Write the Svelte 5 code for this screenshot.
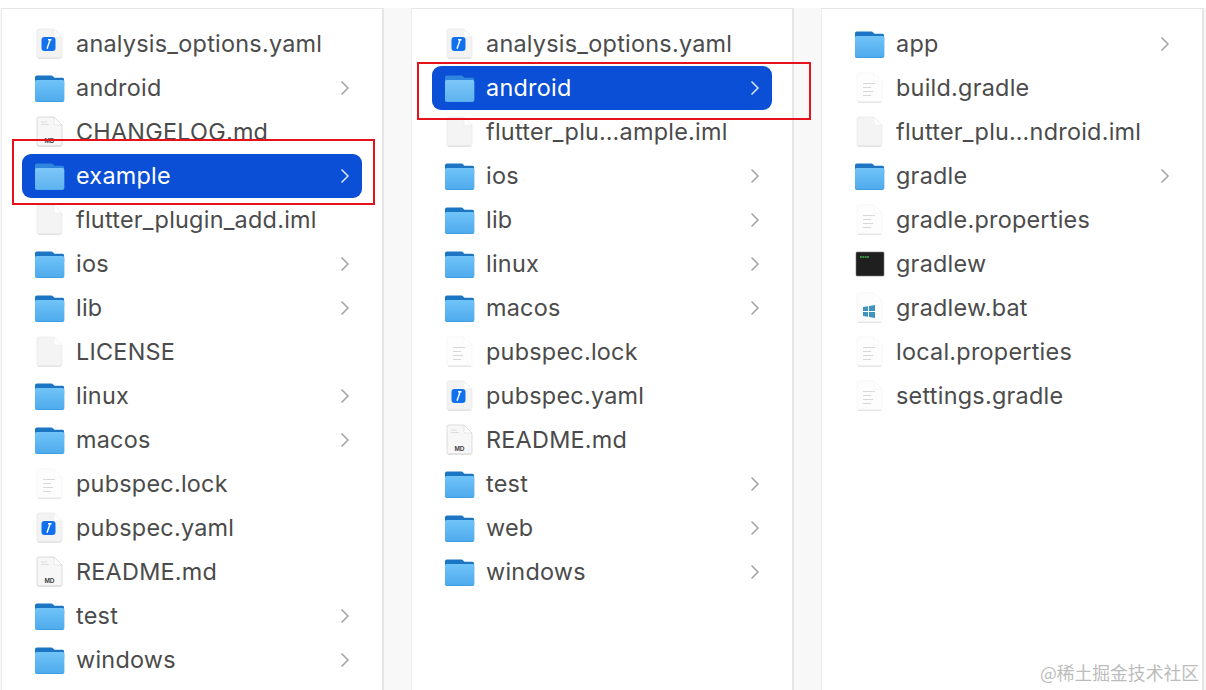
<script>
  const columns = [
    { rows: [
      ['analysis_options.yaml', 'yaml'], ['android', 'folder'], ['CHANGELOG.md', 'md'], ['example', 'folder', true],
      ['flutter_plugin_add.iml', 'file'], ['ios', 'folder'], ['lib', 'folder'], ['LICENSE', 'file'],
      ['linux', 'folder'], ['macos', 'folder'], ['pubspec.lock', 'text'], ['pubspec.yaml', 'yaml'],
      ['README.md', 'md'], ['test', 'folder'], ['windows', 'folder']
    ] },
    { rows: [
      ['analysis_options.yaml', 'yaml'], ['android', 'folder', true], ['flutter_plu…ample.iml', 'file'], ['ios', 'folder'],
      ['lib', 'folder'], ['linux', 'folder'], ['macos', 'folder'], ['pubspec.lock', 'text'],
      ['pubspec.yaml', 'yaml'], ['README.md', 'md'], ['test', 'folder'], ['web', 'folder'], ['windows', 'folder']
    ] },
    { rows: [
      ['app', 'folder'], ['build.gradle', 'text'], ['flutter_plu…ndroid.iml', 'file'], ['gradle', 'folder'],
      ['gradle.properties', 'text'], ['gradlew', 'term'], ['gradlew.bat', 'win'], ['local.properties', 'text'],
      ['settings.gradle', 'text']
    ] }
  ];
</script>

{#snippet sheet(fill, edge)}
  <path d="M4.500 1h15.500l8 8v19.500a1.500 1.500 0 0 1-1.500 1.500H4.500A1.500 1.500 0 0 1 3 28.500V2.500A1.500 1.500 0 0 1 4.500 1z" fill={fill} stroke={edge} stroke-width="0.700"/>
  <path d="M20 1v6.500a1.500 1.500 0 0 0 1.500 1.500H28z" fill="#fff" stroke={edge} stroke-width="0.500"/>
  <path d="M4 30.200h23" stroke="#d6d6d6" stroke-width="0.800"/>
{/snippet}

{#snippet icon(kind, active)}
  <svg class="icon" viewBox="0 0 32 32" width="32" height="32" aria-hidden="true">
    {#if kind === 'folder'}
      <path d="M1 6a2 2 0 0 1 2-2.500h14.500c1.200 0 1.700 1.200 3 2.200h8a1.700 1.700 0 0 1 1.600 1.800V14H1z" fill={active ? '#2f86de' : '#1c76c4'}/>
      <rect x="1" y="8" width="29.200" height="22" rx="1.800" fill={active ? '#55aef0' : '#3f9ee2'}/>
      <rect x="1" y="8" width="29.200" height="21" rx="1.800" fill={active ? 'url(#fa)' : 'url(#fb)'}/>
    {:else if kind === 'yaml'}
      {@render sheet('#f3f3f3', '#e6e6e6')}
      <rect x="7.500" y="9" width="14" height="14" rx="3" fill="#1170ee"/>
      <path d="M16.200 11.500 L13 20.800 M14 11.800h3.500" stroke="#fff" stroke-width="1.400" fill="none"/>
    {:else if kind === 'md'}
      {@render sheet('#f7f7f7', '#cfcfcf')}
      <path d="M7 6h6M7 8.500h8" stroke="#dcdcdc" stroke-width="1.200"/>
      <text x="15.500" y="26.500" text-anchor="middle" class="md">MD</text>
    {:else if kind === 'file'}
      {@render sheet('#f4f4f4', '#e8e8e8')}
    {:else if kind === 'text'}
      {@render sheet('#fdfdfd', '#f3f3f3')}
      <path d="M9 11.500h12M9 15.500h8M9 19.500h10M9 23.500h8" stroke="#d8d8d8" stroke-width="1.100"/>
    {:else if kind === 'win'}
      {@render sheet('#fdfdfd', '#f3f3f3')}
      <path d="M9 15l5-.8v4.800H9zM15 14l6-1v6h-6zM9 20h5v4.800L9 24zM15 20h6v6l-6-1z" fill="#3f93bd"/>
    {:else if kind === 'term'}
      <rect x="2" y="4" width="28" height="24" rx="1" fill="#1f1f1f" stroke="#7d7d7d" stroke-width="0.600"/>
      <path d="M6 9h9" stroke="#41b84f" stroke-width="1.600" stroke-dasharray="1.800 .6"/>
    {/if}
  </svg>
{/snippet}

<svg class="defs" width="0" height="0" aria-hidden="true">
  <defs>
    <linearGradient id="fb" x1="0" y1="0" x2="0" y2="1"><stop offset="0" stop-color="#70c4f8"/><stop offset="1" stop-color="#4fabec"/></linearGradient>
    <linearGradient id="fa" x1="0" y1="0" x2="0" y2="1"><stop offset="0" stop-color="#7cc6f8"/><stop offset="1" stop-color="#5fb3f0"/></linearGradient>
  </defs>
</svg>

<main class="finder">
  {#each columns as col}
    <section class="column">
      {#each col.rows as [name, kind, active]}
        <div class="row" class:active>
          {@render icon(kind, active)}
          <span class="name">{name}</span>
          {#if kind === 'folder'}
            <svg class="chev" viewBox="0 0 10 16" width="10" height="16" aria-hidden="true">
              <path d="M1.500 1.500 L8 8 L1.500 14.500" fill="none" stroke="currentColor" stroke-width="1.500"/>
            </svg>
          {/if}
        </div>
      {/each}
    </section>
  {/each}
  <div class="mark one"></div>
  <div class="mark two"></div>
  <div class="wm">@稀土掘金技术社区</div>
</main>

<style>
  :global(body) { margin: 0; background: #fff; }
  .defs { position: absolute; }
  .finder {
    position: relative;
    display: grid;
    grid-template-columns: repeat(3, 383px);
    column-gap: 27px;
    width: 1206px;
    height: 690px;
    box-sizing: border-box;
    padding: 8px 2px 0 1px;
    overflow: hidden;
    background: linear-gradient(#fff 8px, #f8f8f8 8px);
    font-family: Inter, "Liberation Sans", Arial, sans-serif;
  }
  .column {
    box-sizing: border-box;
    height: 682px;
    padding: 13px 20px 0 20px;
    background: #fff;
    border-top: 1px solid #e6e6e6;
    border-left: 1px solid #ececec;
    border-right: 2px solid #e6e6e6;
  }
  .row {
    display: flex;
    align-items: center;
    height: 44px;
    padding: 0 11px 0 12px;
    border-radius: 9px;
    color: #4b4b4b;
    font-size: 23.400px;
    letter-spacing: 0.25px;
  }
  .row.active { background: #0a4fd6; color: #fff; }
  .icon { flex: none; margin-right: 10px; }
  .name { flex: 1; white-space: nowrap; margin-bottom: 2px; }
  .chev { flex: none; margin-left: 0; color: #a3a3a3; transform: translateX(-1px); }
  .active .chev { color: #dbe6fb; }
  .md { font: bold 6.500px "Liberation Sans", sans-serif; fill: #444; letter-spacing: 0; }
  .mark { position: absolute; border: 2px solid #e5121c; box-sizing: border-box; pointer-events: none; }
  .one { left: 12px; top: 139px; width: 363px; height: 66px; }
  .two { left: 417px; top: 62px; width: 394px; height: 58px; }
  .wm {
    position: absolute;
    right: 7px;
    top: 659px;
    font: 17.800px "Noto Sans CJK SC", sans-serif;
    line-height: 26px;
    color: #bcbcbc;
  }
</style>
